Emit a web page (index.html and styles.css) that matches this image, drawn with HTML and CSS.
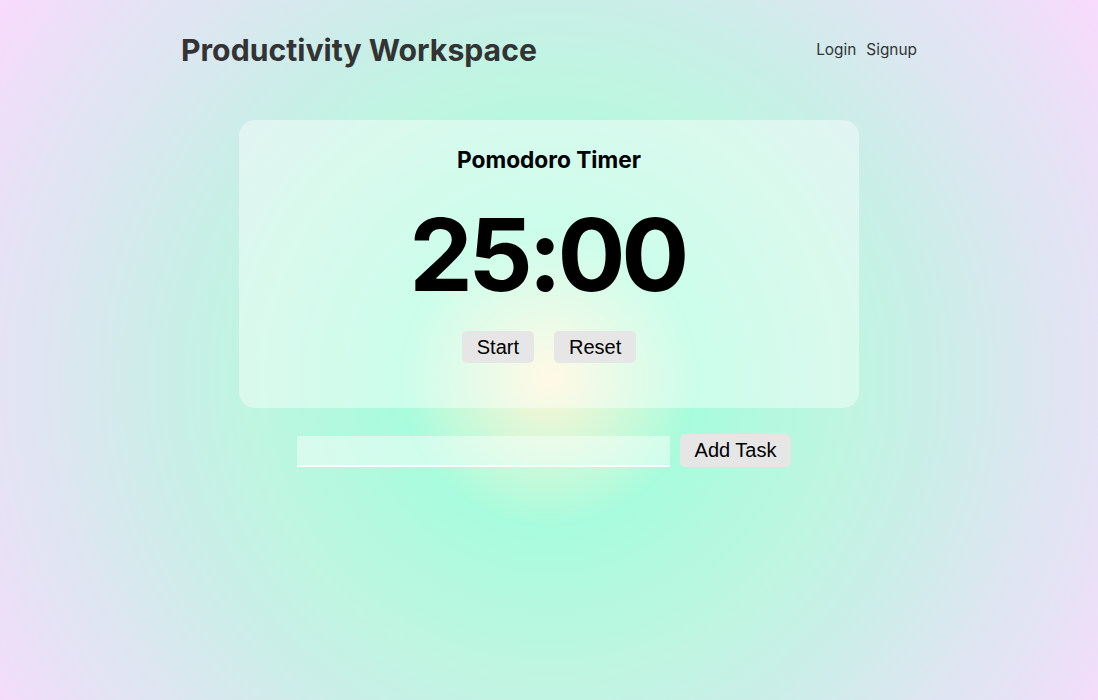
FILE: index.html
```html
<!DOCTYPE html>
<html lang="en">
<head>
<meta charset="utf-8">
<title>Productivity Workspace</title>
<link rel="stylesheet" href="styles.css">
</head>
<body>
<div class="page">
  <header class="header">
    <h1 class="brand">Productivity Workspace</h1>
    <nav class="nav">
      <a class="nav-link" href="#">Login</a>
      <a class="nav-link" href="#">Signup</a>
    </nav>
  </header>
  <main class="main">
    <section class="card">
      <h2 class="card-title">Pomodoro Timer</h2>
      <div class="time">25:00</div>
      <div class="controls">
        <button class="btn">Start</button>
        <button class="btn">Reset</button>
      </div>
    </section>
    <form class="task-form">
      <input class="task-input" type="text">
      <button class="btn btn-add" type="button">Add Task</button>
    </form>
  </main>
</div>
</body>
</html>
```

FILE: styles.css
```css
html, body {
  margin: 0;
  padding: 0;
  height: 100%;
}
body {
  font-family: Inter, "Liberation Sans", sans-serif;
  background: radial-gradient(circle farthest-corner at 50% 54%, #fff5d4 0%, #a8fcdd 22%, #bff5e1 45%, #c9eee7 57%, #dde6f1 74%, #e4e3f4 82%, #f9dafd 100%);
  min-height: 700px;
  overflow: hidden;
}
.page {
  width: 736px;
  margin: 0 auto;
}
.header {
  display: flex;
  justify-content: space-between;
  align-items: center;
  height: 100px;
}
.brand {
  margin: 0;
  font-size: 30.2px;
  font-weight: 700;
  color: #333;
}
.nav {
  display: flex;
  gap: 10px;
  margin-top: -2px;
}
.nav-link {
  color: #333;
  text-decoration: none;
  font-size: 15.4px;
}
.main {
  display: flex;
  flex-direction: column;
  align-items: center;
  padding-top: 20px;
}
.card {
  width: 620px;
  height: 288px;
  box-sizing: border-box;
  background: rgba(255, 255, 255, 0.42);
  border-radius: 16px;
  display: flex;
  flex-direction: column;
  align-items: center;
  padding-top: 26px;
}
.card-title {
  margin: 0;
  font-size: 22.7px;
  font-weight: 700;
  color: #000;
}
.time {
  font-size: 101px;
  font-weight: 700;
  color: #000;
  line-height: 1;
  margin-top: 31px;
  margin-right: 4px;
  letter-spacing: -4.5px;
}
.controls {
  display: flex;
  gap: 20px;
  margin-top: 26px;
}
.btn {
  font-family: "Liberation Sans", Arial, sans-serif;
  font-size: 20px;
  color: #000;
  background: #e6e6e6;
  border: none;
  border-radius: 5px;
  height: 32px;
  padding: 0 15px;
}
.task-form {
  display: flex;
  align-items: center;
  gap: 10px;
  margin-top: 26px;
  padding-right: 10px;
}
.task-input {
  width: 373px;
  height: 31px;
  box-sizing: border-box;
  border: none;
  border-bottom: 2px solid rgba(255, 255, 255, 0.8);
  background: rgba(255, 255, 255, 0.45);
  outline: none;
  margin-top: 2px;
}
.btn-add {
  height: 33px;
  padding: 0 15px;
}
```
